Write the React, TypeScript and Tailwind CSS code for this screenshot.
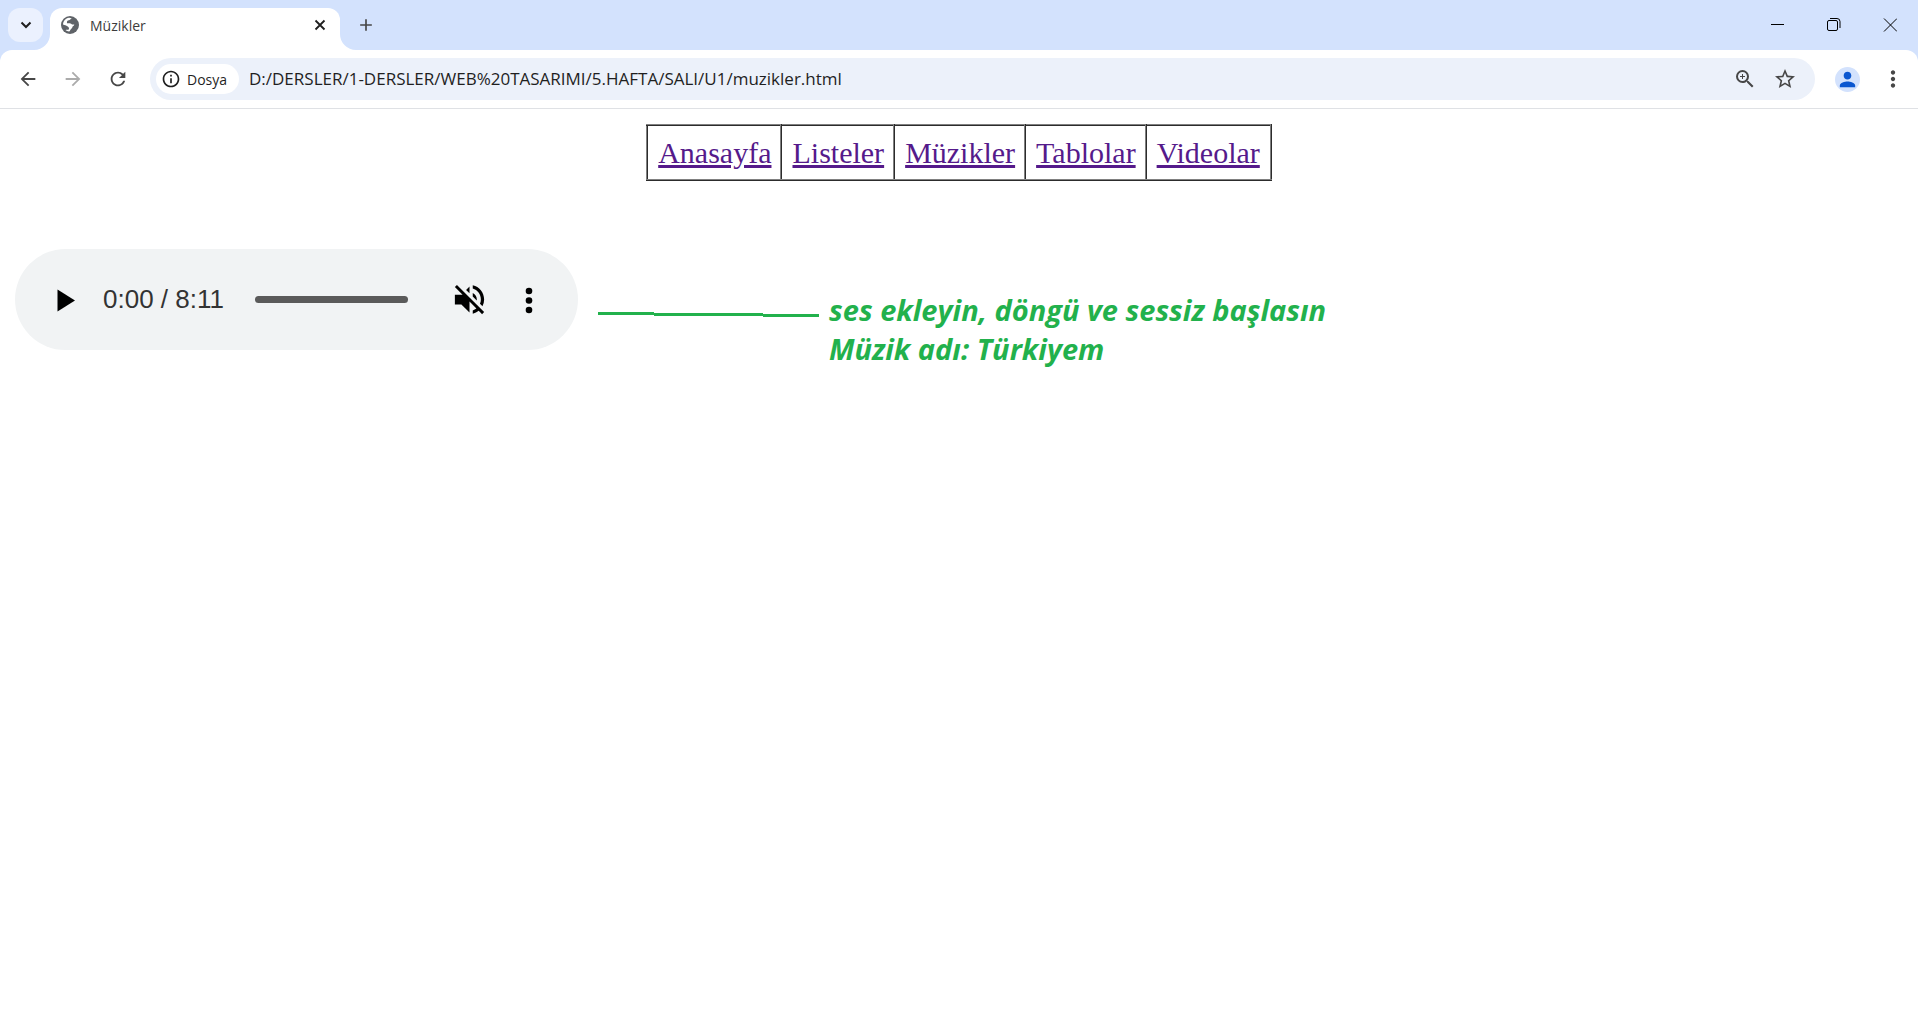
import React from "react";
import {
  MdArrowBack,
  MdArrowForward,
  MdRefresh,
  MdInfoOutline,
  MdZoomIn,
  MdStarBorder,
  MdPerson,
  MdMoreVert,
  MdVolumeOff,
  MdAdd,
} from "react-icons/md";

const pages = [
  { name: "Anasayfa", href: "#anasayfa" },
  { name: "Listeler", href: "#listeler" },
  { name: "Müzikler", href: "#muzikler" },
  { name: "Tablolar", href: "#tablolar" },
  { name: "Videolar", href: "#videolar" },
];

const address =
  "D:/DERSLER/1-DERSLER/WEB%20TASARIMI/5.HAFTA/SALI/U1/muzikler.html";

function GlobeIcon() {
  return (
    <svg className="size-[18px]" viewBox="0 0 18 18" aria-hidden="true">
      <circle cx="9" cy="9" r="9" fill="#5f6368" />
      <path
        d="M11.500 2.200C9 2.200 10 4 8 4.200 6 4.500 5.800 5.500 6 7.200c1.500.2 3.500-.4 4.500.8.4.8 1.800.4 2.800.6-.2 1.700-1.800 1.500-2 2.900-.3 1.400-2.100 1.500-2.500 3.800-1.300.3-3.300-.2-4.300-1.200 1.300-.6 3.300.3 3.500-1.300C8.200 10.500 5.500 9.500 2 8.500 2.200 5 4.500 2.500 8 1.800z"
        fill="#fff"
      />
    </svg>
  );
}

function TabStrip() {
  return (
    <div className="flex h-[50px] items-end justify-between bg-[#d3e2fd]">
      <div className="flex h-[42px]">
        <button
          aria-label="Sekmelerde ara"
          className="ml-2 mr-[7px] flex h-[34px] w-[35px] items-center justify-center rounded-xl bg-[#ebf1fe]"
        >
          <svg className="size-3" viewBox="0 0 12 12" fill="none" stroke="#1f1f1f" strokeWidth="2" aria-hidden="true">
            <path d="M1.500 3.500L6 8l4.500-4.500" />
          </svg>
        </button>
        <div className="relative flex w-[290px] rounded-t-xl bg-white pb-2 pl-[11px] pr-2.5">
          <svg className="absolute -left-4 bottom-0 size-4" viewBox="0 0 16 16" aria-hidden="true">
            <path d="M16 0v16H0A16 16 0 0 0 16 0Z" fill="#fff" />
          </svg>
          <svg className="absolute -right-4 bottom-0 size-4" viewBox="0 0 16 16" aria-hidden="true">
            <path d="M0 0v16h16A16 16 0 0 1 0 0Z" fill="#fff" />
          </svg>
          <div className="flex flex-1 items-center gap-[11px]">
            <GlobeIcon />
            <span className="text-[14px] text-[#3c3c3c]">Müzikler</span>
          </div>
          <button aria-label="Sekmeyi kapat" className="flex w-5 items-center justify-center">
            <svg className="size-3" viewBox="0 0 12 12" stroke="#1f1f1f" strokeWidth="1.800" aria-hidden="true">
              <path d="M1.500 1.500l9 9M10.500 1.500l-9 9" />
            </svg>
          </button>
        </div>
        <button aria-label="Yeni sekme" className="ml-4 flex h-[34px] w-5 items-center justify-center">
          <MdAdd className="size-[22px] text-[#474747]" />
        </button>
      </div>
      <div className="flex h-full text-black">
        <button aria-label="Simge durumuna küçült" className="flex w-14 items-center justify-center">
          <svg className="size-[14px]" viewBox="0 0 14 14" aria-hidden="true">
            <path d="M0 6.500h13" stroke="currentColor" />
          </svg>
        </button>
        <button aria-label="Önceki boyut" className="flex w-14 items-center justify-center">
          <svg className="size-[14px]" viewBox="0 0 14 14" fill="none" stroke="currentColor" aria-hidden="true">
            <rect x="0.5" y="2.5" width="10" height="10" rx="1.5" />
            <path d="M3 .5h7a3 3 0 0 1 3 3V10" />
          </svg>
        </button>
        <button aria-label="Kapat" className="flex w-14 items-center justify-center">
          <svg className="size-[14px]" viewBox="0 0 14 14" stroke="currentColor" aria-hidden="true">
            <path d="M1 .5l13 13M14 .5l-13 13" />
          </svg>
        </button>
      </div>
    </div>
  );
}

function Toolbar() {
  return (
    <div className="bg-[#d3e2fd]">
      <div className="flex h-[59px] items-center rounded-t-xl border-b border-[#dfe1e5] bg-white pr-3 text-[#474747]">
        <div className="flex w-[150px] gap-[23px] pl-[17px]">
          <button aria-label="Geri">
            <MdArrowBack className="size-[22px]" />
          </button>
          <button aria-label="İleri" className="text-[#ababab]">
            <MdArrowForward className="size-[22px]" />
          </button>
          <button aria-label="Yenile">
            <MdRefresh className="size-[22px]" />
          </button>
        </div>
        <div className="flex h-[42px] flex-1 items-center rounded-full bg-[#ecf1fa] pl-1.5 pr-[18px]">
          <button className="flex h-[30px] w-[83px] items-center gap-1.5 rounded-full bg-white pl-[5px] text-[14px] font-medium text-[#1f1f1f]">
            <MdInfoOutline className="size-5" />
            Dosya
          </button>
          <input
            aria-label="Adres"
            defaultValue={address}
            className="ml-2.5 flex-1 bg-transparent text-[17px] text-[#1f1f1f] outline-none"
          />
          <div className="flex gap-4">
            <button aria-label="Yakınlaştır">
              <MdZoomIn className="size-6" />
            </button>
            <button aria-label="Yer işareti ekle">
              <MdStarBorder className="size-6" />
            </button>
          </div>
        </div>
        <button
          aria-label="Profil"
          className="ml-5 flex size-[25px] items-center justify-center rounded-full bg-[#d3e2fd] text-[#0b57d0]"
        >
          <MdPerson className="size-[23px]" />
        </button>
        <button aria-label="Menü" className="ml-5">
          <MdMoreVert className="size-[26px]" />
        </button>
      </div>
    </div>
  );
}

function NavTable() {
  return (
    <table className="mx-auto border-collapse border-2 border-[#808080] font-['Liberation_Serif',serif] text-[30px] leading-[33px] [border-style:ridge]">
      <tbody>
        <tr>
          {pages.map((page) => (
            <td key={page.name} className="border-2 border-[#808080] py-2.5 pl-2.5 pr-[9px] last:pr-2.5 [border-style:ridge]">
              <a href={page.href} className="text-[#551a8b] underline decoration-[3px]">
                {page.name}
              </a>
            </td>
          ))}
        </tr>
      </tbody>
    </table>
  );
}

function AudioPlayer() {
  return (
    <div className="flex h-[101px] w-[563px] items-center rounded-full bg-[#f1f3f4] pl-[34px]">
      <button aria-label="Oynat" className="flex size-8 items-center justify-center">
        <svg className="size-8" viewBox="0 0 32 32" aria-hidden="true">
          <path d="M8.500 5.500v22l17.500-11z" />
        </svg>
      </button>
      <span className="ml-[22px] w-[137px] font-['Liberation_Sans',sans-serif] text-[26px] text-[#333]">
        0:00 / 8:11
      </span>
      <input
        type="range"
        aria-label="Konum"
        min={0}
        max={491}
        defaultValue={0}
        className="ml-[15px] h-[7px] w-[153px] appearance-none rounded-full bg-[#5a5a5a] [&::-webkit-slider-thumb]:size-0 [&::-webkit-slider-thumb]:appearance-none"
      />
      <button aria-label="Sesi aç" className="ml-[42px] text-black">
        <MdVolumeOff className="size-[39px]" />
      </button>
      <button aria-label="Diğer seçenekler" className="ml-[22px]">
        <svg className="size-9" viewBox="0 0 36 36" aria-hidden="true">
          <circle cx="18" cy="9" r="3.300" />
          <circle cx="18" cy="18.500" r="3.300" />
          <circle cx="18" cy="28" r="3.300" />
        </svg>
      </button>
    </div>
  );
}

export default function App() {
  return (
    <div className="min-h-screen bg-white font-['Open_Sans',sans-serif]">
      <header>
        <TabStrip />
        <Toolbar />
      </header>
      <main className="px-[15px] pt-[15px]">
        <NavTable />
        <section className="mt-[68px] flex items-start">
          <AudioPlayer />
          <svg className="ml-5 mt-[63px] h-[5px] w-[221px]" viewBox="0 0 221 5" fill="#22b14c" aria-hidden="true">
            <path d="M0 0h56v3H0zM56 1h109v3H56zM165 2h56v3H165z" />
          </svg>
          <p className="ml-2.5 mt-[41px] text-[29px] font-bold italic leading-[39px] text-[#22b14c]">
            ses ekleyin, döngü ve sessiz başlasın
            <br />
            Müzik adı: Türkiyem
          </p>
        </section>
      </main>
    </div>
  );
}
